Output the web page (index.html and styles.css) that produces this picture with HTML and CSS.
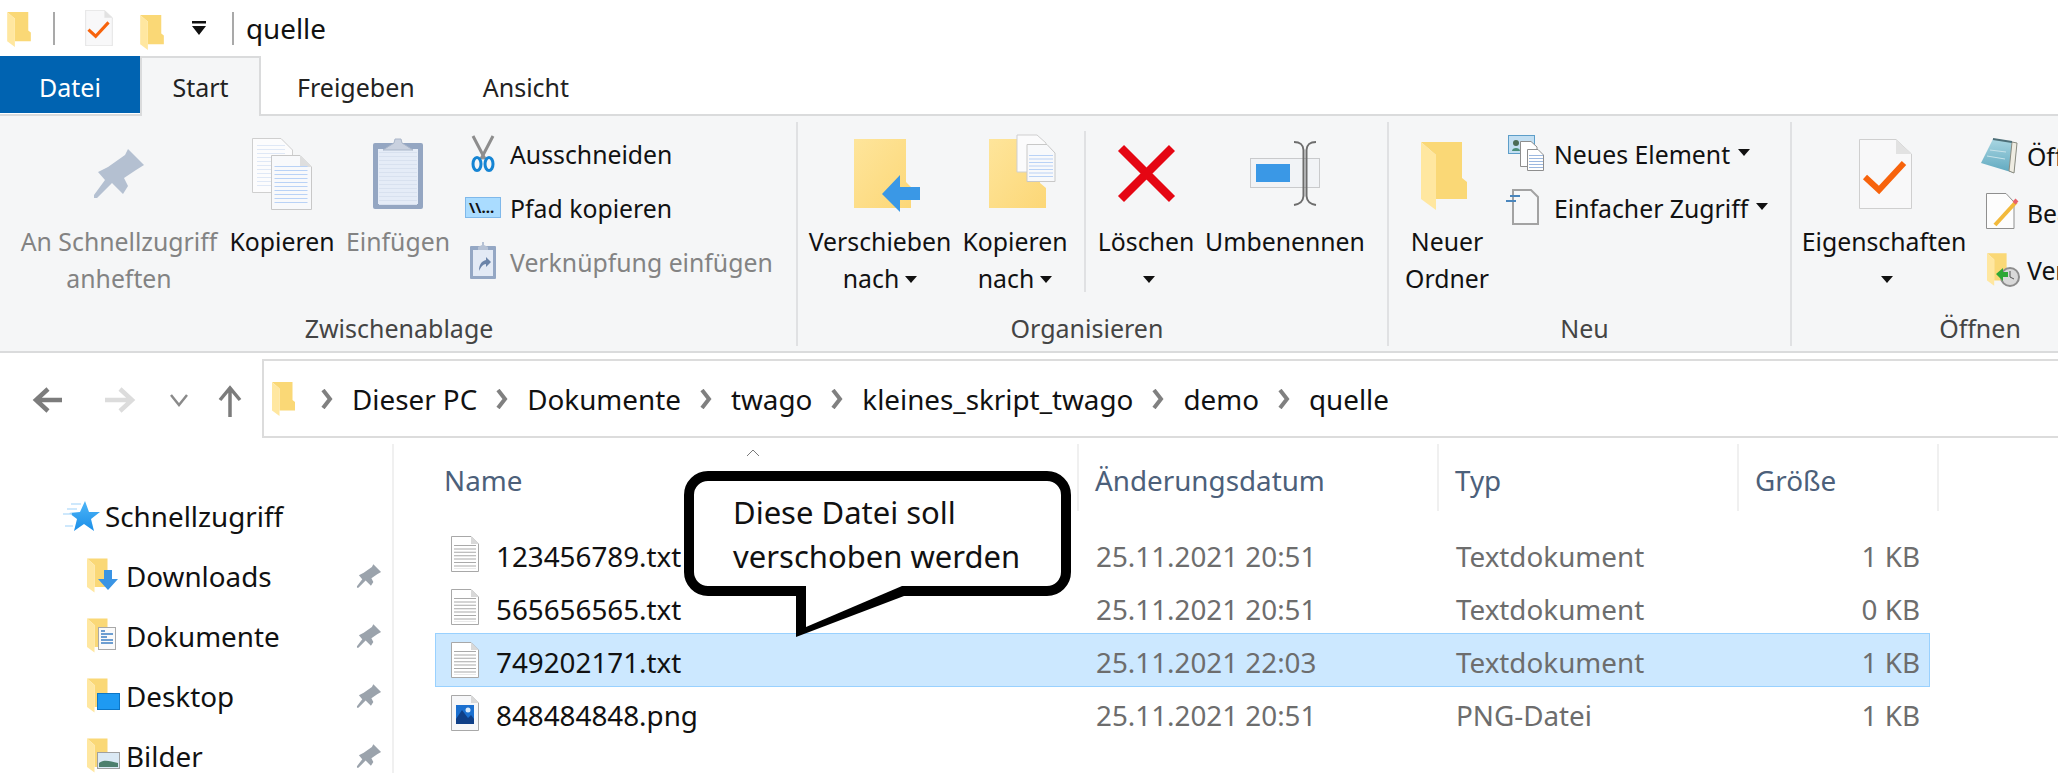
FILE: index.html
```html
<!DOCTYPE html>
<html lang="de">

<head>
    <meta charset="UTF-8">
    <meta name="viewport" content="width=device-width, initial-scale=1.0">
    <title>quelle</title>
    <link rel="stylesheet" href="styles.css">
</head>

<body>
    <!-- shared icon shapes -->
    <svg class="icon-defs" width="0" height="0">
        <defs>
            <linearGradient id="folderBody" x1="0" y1="0" x2="1" y2="1">
                <stop offset="0" stop-color="#fee59b" />
                <stop offset="1" stop-color="#fcd777" />
            </linearGradient>
            <linearGradient id="padBody" x1="0" y1="0" x2="0" y2="1">
                <stop offset="0" stop-color="#a9d6e2" />
                <stop offset="1" stop-color="#5fa8bf" />
            </linearGradient>
            <linearGradient id="starBody" x1="0" y1="0" x2="0" y2="1">
                <stop offset="0" stop-color="#4db5f7" />
                <stop offset="1" stop-color="#1c8fe8" />
            </linearGradient>
            <symbol id="folder" viewBox="0 0 46 68">
                <path d="M0 0H41V36L46 40V57H15V13Z" fill="#fad876" />
                <path d="M0 0L15 13V68L0 57Z" fill="#ffe7a0" />
            </symbol>
            <symbol id="pin" viewBox="92 147 54 53">
                <path d="M128 149L144 165L136 170L124 178L128 186L123 194L112 183L97 198H94V195L105 180L98 172L108 167L125 155Z" />
            </symbol>
            <symbol id="prop-doc" viewBox="0 0 53 70">
                <path d="M.5.5H37L52.5 15V69.5H.5Z" fill="#f8f8f9" stroke="#cfcfcf" />
                <path d="M37 .5V15H52.5Z" fill="#e2e2e2" />
                <path d="M6 38L20 51L45 24" fill="none" stroke="#f7630c" stroke-width="6" />
            </symbol>
            <symbol id="txt-file" viewBox="0 0 28 36">
                <path d="M.5.5H20L27.5 8V35.5H.5Z" fill="#fff" stroke="#a8a8a8" />
                <path d="M20 .5V8H27.5Z" fill="#d9d9d9" />
                <path d="M14 9V33" stroke="#a9a9a9" stroke-width="22" stroke-dasharray="1 2.4" />
            </symbol>
            <symbol id="chevron" viewBox="0 0 12 20">
                <path d="M2 1L9 10L2 19" fill="none" stroke="#808080" stroke-width="4" />
            </symbol>
        </defs>
    </svg>

    <div class="explorer">
        <div class="title-bar">
            <svg class="qat-folder" width="24" height="35"><use href="#folder" /></svg>
            <span class="qat-sep"></span>
            <svg class="qat-props" width="28" height="36"><use href="#prop-doc" /></svg>
            <svg class="qat-folder2" width="24" height="35"><use href="#folder" /></svg>
            <svg class="qat-drop" width="14" height="14" viewBox="0 0 14 14">
                <path d="M0 0H14V2.500H0ZM0 5H14L7 14Z" fill="#111" />
            </svg>
            <span class="qat-sep qat-sep-last"></span>
            <span class="window-title">quelle</span>
        </div>

        <div class="tabs">
            <div class="tab tab-file">Datei</div>
            <div class="tab tab-active">Start</div>
            <div class="tab tab-share">Freigeben</div>
            <div class="tab tab-view">Ansicht</div>
        </div>

        <div class="ribbon">
            <section class="group group-clipboard">
                <div class="group-body">
                    <div class="big-btn btn-pin disabled">
                        <svg class="big-icon" viewBox="59 116 120 108">
                            <use href="#pin" x="92" y="147" width="54" height="53" fill="#b4c0d1" />
                        </svg>
                        <span>An Schnellzugriff<br>anheften</span>
                    </div>
                    <div class="big-btn btn-copy">
                        <svg class="big-icon" viewBox="222 116 120 108">
                            <path d="M252.500 138.500H281L292.500 150V192.500H252.500Z" fill="#fcfcfd" stroke="#cfcfcf" />
                            <path d="M271 145V186" stroke="#dfe8f6" stroke-width="28" stroke-dasharray="1 3" />
                            <path d="M271.500 155.500H300L311.500 167V209.500H271.500Z" fill="#f8f9fb" stroke="#c8c8c8" />
                            <path d="M300 155.500V167H311.500Z" fill="#dedede" />
                            <path d="M291 166V204" stroke="#b9d2f6" stroke-width="33" stroke-dasharray="1 3" />
                        </svg>
                        <span>Kopieren</span>
                    </div>
                    <div class="big-btn btn-paste disabled">
                        <svg class="big-icon" viewBox="338 116 120 108">
                            <rect x="373" y="143" width="50" height="66" rx="2" fill="#94a6c2" />
                            <rect x="378" y="149" width="40" height="55" fill="#e5ecf7" />
                            <path d="M398 152V205" stroke="#d8e1ef" stroke-width="38" stroke-dasharray="1 3" />
                            <path d="M383 150L394 143L395 139H401L402 143L413 150Z" fill="#c9d1df" stroke="#aab6c9" />
                        </svg>
                        <span>Einfügen</span>
                    </div>
                    <div class="small-col">
                        <div class="small-btn">
                            <svg class="small-icon" viewBox="460 133 44 44">
                                <path d="M473 137L485 160M493 137L481 160" stroke="#8d8d8d" stroke-width="3" fill="none" />
                                <ellipse cx="477" cy="165" rx="4" ry="6.500" fill="none" stroke="#1584d3" stroke-width="3" />
                                <ellipse cx="489" cy="165" rx="4" ry="6.500" fill="none" stroke="#1584d3" stroke-width="3" />
                            </svg>
                            <span>Ausschneiden</span>
                        </div>
                        <div class="small-btn">
                            <svg class="small-icon" viewBox="460 187 44 44">
                                <rect x="465.500" y="198.500" width="35" height="20" fill="#aadcff" stroke="#7fb8ea" />
                                <text class="path-glyph" x="469" y="214">\\...</text>
                            </svg>
                            <span>Pfad kopieren</span>
                        </div>
                        <div class="small-btn disabled">
                            <svg class="small-icon" viewBox="460 241 44 44">
                                <rect x="470" y="247" width="26" height="33" rx="1" fill="#94a7c4" />
                                <rect x="473" y="251" width="20" height="26" fill="#e3eaf5" />
                                <path d="M478 248L482 246V243H484V246L488 248V251H478Z" fill="#b6c2d5" />
                                <path d="M479 272C479 265 482 262 486 261V258L491 263L486 268V265C483 265 481 268 479 272Z" fill="#6b84a9" />
                            </svg>
                            <span>Verknüpfung einfügen</span>
                        </div>
                    </div>
                </div>
                <div class="group-label">Zwischenablage</div>
            </section>

            <section class="group group-organize">
                <div class="group-body">
                    <div class="big-btn btn-move">
                        <svg class="big-icon" viewBox="820 116 120 108">
                            <path d="M854 139H906V182L911 187V208H854Z" fill="url(#folderBody)" />
                            <path d="M882 194L900 175V187H920V200H900V212Z" fill="#3a98e6" />
                        </svg>
                        <span>Verschieben<br>nach<i class="drop"></i></span>
                    </div>
                    <div class="big-btn btn-copyto">
                        <svg class="big-icon" viewBox="955 116 120 108">
                            <path d="M989 139H1040V183L1046 188V208H989Z" fill="url(#folderBody)" />
                            <path d="M1017 135H1037L1046 143V172H1017Z" fill="#fbfbfc" stroke="#cfcfcf" />
                            <path d="M1027 144.500H1047L1055 153V181.500H1027Z" fill="#f8f9fb" stroke="#c8c8c8" />
                            <path d="M1041 155V179" stroke="#b9d2f6" stroke-width="24" stroke-dasharray="1 2.500" />
                        </svg>
                        <span>Kopieren<br>nach<i class="drop"></i></span>
                    </div>
                    <span class="inner-sep"></span>
                    <div class="big-btn btn-delete">
                        <svg class="big-icon" viewBox="1086 116 120 108">
                            <path d="M1121 148L1172 199M1172 148L1121 199" stroke="#e50613" stroke-width="8.500" fill="none" />
                        </svg>
                        <span>Löschen<br><i class="drop"></i></span>
                    </div>
                    <div class="big-btn btn-rename">
                        <svg class="big-icon" viewBox="1225 116 120 108">
                            <rect x="1250.500" y="158.500" width="69" height="29" fill="#f1f3f6" stroke="#c9cacc" />
                            <rect x="1256" y="164" width="34" height="18" fill="#3a98e6" />
                            <path d="M1294 142C1301 142 1303 145 1303.500 150V196C1303 201 1301 204 1294 205M1316 142C1309 142 1307 145 1306.500 150V196C1307 201 1309 204 1316 205" fill="none" stroke="#6d6d6d" stroke-width="2" />
                        </svg>
                        <span>Umbenennen</span>
                    </div>
                </div>
                <div class="group-label">Organisieren</div>
            </section>

            <section class="group group-new">
                <div class="group-body">
                    <div class="big-btn btn-newfolder">
                        <svg class="big-icon" viewBox="1387 116 120 108">
                            <use href="#folder" x="1421" y="142" width="46" height="68" />
                        </svg>
                        <span>Neuer<br>Ordner</span>
                    </div>
                    <div class="small-col">
                        <div class="small-btn">
                            <svg class="small-icon" viewBox="1504 133 44 44">
                                <rect x="1508.500" y="136.500" width="26" height="18" fill="#c3dff2" stroke="#5d9ec9" />
                                <circle cx="1516" cy="144" r="3" fill="#4b6b55" />
                                <path d="M1512 152C1512 148 1520 148 1520 152Z" fill="#4b8f7a" />
                                <path d="M1520.500 142.500H1531L1537 148V167.500H1520.500Z" fill="#fff" stroke="#8e8e8e" />
                                <path d="M1527.500 150.500H1538L1543.500 156V171.500H1527.500Z" fill="#fff" stroke="#8e8e8e" />
                                <path d="M1536 156V171" stroke="#9cb8e0" stroke-width="14" stroke-dasharray="1 2" />
                            </svg>
                            <span>Neues Element<i class="drop"></i></span>
                        </div>
                        <div class="small-btn">
                            <svg class="small-icon" viewBox="1504 187 44 44">
                                <path d="M1513 191H1531L1538 198V225H1513Z" fill="#f7f8f9" stroke="#a3a3a3" stroke-width="2" />
                                <path d="M1510 197H1520M1506 202H1516" stroke="#4a86bd" stroke-width="2" />
                            </svg>
                            <span>Einfacher Zugriff<i class="drop"></i></span>
                        </div>
                    </div>
                </div>
                <div class="group-label">Neu</div>
            </section>

            <section class="group group-open">
                <div class="group-body">
                    <div class="big-btn btn-props">
                        <svg class="big-icon" viewBox="1824 116 120 108">
                            <use href="#prop-doc" x="1859" y="139" width="53" height="70" />
                        </svg>
                        <span>Eigenschaften<br><i class="drop"></i></span>
                    </div>
                    <div class="small-col small-col-wide">
                        <div class="small-btn">
                            <svg class="small-icon" viewBox="1977 134 44 44">
                                <path d="M1993 139L2017 143L2014 173L1981 163Z" fill="url(#padBody)" />
                                <path d="M2017 143L2014 173L2009 171L2012 142Z" fill="#eeece2" stroke="#8b8b80" />
                                <path d="M1993 139L2012 142" stroke="#4d6f78" stroke-width="2" />
                                <path d="M1990 150L2006 152M1987 156L2005 159" stroke="#c7e3ea" />
                            </svg>
                            <span>Öffnen</span>
                        </div>
                        <div class="small-btn">
                            <svg class="small-icon" viewBox="1977 192 44 44">
                                <path d="M1986.500 194.500H2006L2014 203V229.500H1986.500Z" fill="#fdfdfd" stroke="#8f8f8f" />
                                <path d="M2016 203L1995 226" stroke="#f2b93b" stroke-width="4" />
                                <path d="M2017 201L2014 204" stroke="#e8616a" stroke-width="4" />
                            </svg>
                            <span>Bearbeiten</span>
                        </div>
                        <div class="small-btn">
                            <svg class="small-icon" viewBox="1977 248 44 44">
                                <use href="#folder" x="1987" y="252" width="22" height="35" />
                                <circle cx="2010" cy="277" r="9" fill="#d9d9d9" stroke="#8d8d8d" stroke-width="2" />
                                <path d="M2010 271V277L2014 279" fill="none" stroke="#555" />
                                <path d="M1996 274L2003 268V272H2008V277H2003V281Z" fill="#2ea836" />
                            </svg>
                            <span>Verlauf</span>
                        </div>
                    </div>
                </div>
                <div class="group-label">Öffnen</div>
            </section>
        </div>

        <div class="nav-row">
            <svg class="nav-buttons" width="262" height="79" viewBox="0 359 262 79">
                <path d="M62 400H38M48 389L36 400L48 411" fill="none" stroke="#7c7c7c" stroke-width="4.500" />
                <path d="M105 400H130M120 389L132 400L120 411" fill="none" stroke="#dcdcdc" stroke-width="4.500" />
                <path d="M171 395L179 405L187 395" fill="none" stroke="#8a8a8a" stroke-width="2.500" />
                <path d="M230 417V390M220 400L230 388L240 400" fill="none" stroke="#7c7c7c" stroke-width="3.500" />
            </svg>
            <div class="address-bar">
                <svg class="addr-folder" width="23" height="34"><use href="#folder" /></svg>
                <svg class="crumb-sep crumb-sep-first" width="12" height="20"><use href="#chevron" /></svg>
                <span>Dieser PC</span>
                <svg class="crumb-sep" width="12" height="20"><use href="#chevron" /></svg>
                <span>Dokumente</span>
                <svg class="crumb-sep" width="12" height="20"><use href="#chevron" /></svg>
                <span>twago</span>
                <svg class="crumb-sep" width="12" height="20"><use href="#chevron" /></svg>
                <span>kleines_skript_twago</span>
                <svg class="crumb-sep" width="12" height="20"><use href="#chevron" /></svg>
                <span>demo</span>
                <svg class="crumb-sep" width="12" height="20"><use href="#chevron" /></svg>
                <span>quelle</span>
            </div>
        </div>

        <div class="content">
            <nav class="sidebar">
                <div class="side-item side-root">
                    <svg class="side-star" width="38" height="32" viewBox="0 0 38 32">
                        <path d="M22 1L26 12L37 12L28 19L31 31L21 24L11 31L14 19L6 13L17 12Z" fill="url(#starBody)" />
                        <path d="M0 14H9M4 9H14M8 4H18M2 26H10" stroke="#bfe1fb" stroke-width="1.500" />
                    </svg>
                    <span>Schnellzugriff</span>
                </div>
                <div class="side-item">
                    <svg class="side-icon" width="34" height="36" viewBox="0 0 34 36">
                        <use href="#folder" width="23" height="35" />
                        <path d="M17 12H25V21H31L21 32L11 21H17Z" fill="#3a94e4" />
                    </svg>
                    <span>Downloads</span>
                    <svg class="side-pin" width="26" height="26"><use href="#pin" /></svg>
                </div>
                <div class="side-item">
                    <svg class="side-icon" width="34" height="36" viewBox="0 0 34 36">
                        <use href="#folder" width="23" height="35" />
                        <rect x="11.500" y="9.500" width="17" height="22" fill="#fafafa" stroke="#a8a8a8" />
                        <path d="M14 13H18M14 16H26M14 19H20M14 22H26M14 25H26" stroke="#3f80c4" stroke-width="1.500" />
                    </svg>
                    <span>Dokumente</span>
                    <svg class="side-pin" width="26" height="26"><use href="#pin" /></svg>
                </div>
                <div class="side-item">
                    <svg class="side-icon" width="34" height="36" viewBox="0 0 34 36">
                        <use href="#folder" width="23" height="35" />
                        <rect x="10.500" y="15.500" width="22" height="16" fill="#1e9af2" stroke="#0c76c6" />
                    </svg>
                    <span>Desktop</span>
                    <svg class="side-pin" width="26" height="26"><use href="#pin" /></svg>
                </div>
                <div class="side-item">
                    <svg class="side-icon" width="34" height="36" viewBox="0 0 34 36">
                        <use href="#folder" width="23" height="35" />
                        <rect x="10.500" y="14.500" width="22" height="16" fill="#dbe9f4" stroke="#a0a0a0" />
                        <path d="M12 25C17 21 23 23 31 25V29H12Z" fill="#4d7f6d" />
                    </svg>
                    <span>Bilder</span>
                    <svg class="side-pin" width="26" height="26"><use href="#pin" /></svg>
                </div>
            </nav>

            <main class="file-list">
                <div class="list-head">
                    <div class="col-head col-name">
                        Name
                        <svg class="sort-caret" width="14" height="8" viewBox="0 0 14 8">
                            <path d="M1 7L7 1L13 7" fill="none" stroke="#7a7a7a" />
                        </svg>
                    </div>
                    <div class="col-head">Änderungsdatum</div>
                    <div class="col-head">Typ</div>
                    <div class="col-head">Größe</div>
                </div>
                <div class="file-row">
                    <div class="file-name">
                        <svg width="28" height="36"><use href="#txt-file" /></svg>
                        <span>123456789.txt</span>
                    </div>
                    <div>25.11.2021 20:51</div>
                    <div>Textdokument</div>
                    <div class="file-size">1 KB</div>
                </div>
                <div class="file-row">
                    <div class="file-name">
                        <svg width="28" height="36"><use href="#txt-file" /></svg>
                        <span>565656565.txt</span>
                    </div>
                    <div>25.11.2021 20:51</div>
                    <div>Textdokument</div>
                    <div class="file-size">0 KB</div>
                </div>
                <div class="file-row selected">
                    <div class="file-name">
                        <svg width="28" height="36"><use href="#txt-file" /></svg>
                        <span>749202171.txt</span>
                    </div>
                    <div>25.11.2021 22:03</div>
                    <div>Textdokument</div>
                    <div class="file-size">1 KB</div>
                </div>
                <div class="file-row">
                    <div class="file-name">
                        <svg width="28" height="36" viewBox="0 0 28 36">
                            <path d="M.5.5H20L27.5 8V35.5H.5Z" fill="#f6f7f9" stroke="#a8a8a8" />
                            <path d="M20 .5V8H27.5Z" fill="#d9d9d9" />
                            <rect x="5" y="10" width="18" height="19" fill="#1a6fcf" />
                            <circle cx="17" cy="15" r="2.500" fill="#d8eafb" />
                            <path d="M5 29V24L11 15L17 23L20 20L23 24V29Z" fill="#0f3f87" />
                        </svg>
                        <span>848484848.png</span>
                    </div>
                    <div>25.11.2021 20:51</div>
                    <div>PNG-Datei</div>
                    <div class="file-size">1 KB</div>
                </div>
            </main>
        </div>

        <!-- speech bubble lies over the list -->
        <div class="bubble">
            Diese Datei soll<br>verschoben werden
            <svg class="bubble-tail" width="120" height="60" viewBox="790 580 120 60">
                <path d="M796 586V637L904 596V586Z" fill="#000" />
                <path d="M806 580V627L902 586V580Z" fill="#fff" />
            </svg>
        </div>
    </div>
</body>

</html>
```

FILE: styles.css
```css
* {
    box-sizing: border-box;
}

html,
body {
    margin: 0;
    padding: 0;
    background-color: #fff;
    overflow: hidden;
}

body {
    font-family: "Noto Sans", "Open Sans", sans-serif;
    font-size: 27.8px;
    color: #111;
}

.icon-defs {
    position: absolute;
}

.explorer {
    position: relative;
    width: 2058px;
    height: 773px;
    overflow: hidden;
}

/* title bar */
.title-bar {
    display: flex;
    align-items: center;
    height: 56px;
    padding-left: 7px;
}

.qat-folder {
    margin-top: 2px;
}

.qat-sep {
    width: 2px;
    height: 33px;
    margin-left: 22px;
    background-color: #a9a9a9;
}

.qat-props {
    margin-left: 30px;
}

.qat-folder2 {
    margin-left: 27px;
    margin-top: 8px;
}

.qat-drop {
    margin-left: 28px;
}

.qat-sep-last {
    margin-left: 26px;
}

.window-title {
    margin-left: 12px;
    line-height: 42px;
}

/* tabs */
.tabs {
    display: flex;
    height: 60px;
    border-bottom: 2px solid #dadbdc;
}

.tab {
    height: 59px;
    line-height: 62px;
    font-size: 25px;
    color: #222;
}

.tab-file {
    width: 140px;
    height: 57px;
    background-color: #0063b1;
    color: #fff;
    text-align: center;
}

.tab-active {
    width: 121px;
    height: 60px;
    background-color: #f5f6f7;
    border: 2px solid #dadbdc;
    border-bottom: 0;
    line-height: 58px;
    text-align: center;
}

.tab-share {
    margin-left: 36px;
}

.tab-view {
    margin-left: 68px;
}

/* ribbon */
.ribbon {
    display: flex;
    height: 237px;
    background-color: #f5f6f7;
    border-bottom: 2px solid #dadbdc;
}

.group {
    display: flex;
    flex-direction: column;
    flex: none;
    height: 235px;
}

.group-clipboard {
    width: 798px;
    padding-left: 19px;
    background: linear-gradient(#e0e1e3, #e0e1e3) no-repeat right 6px / 2px 224px;
}

.group-organize {
    width: 591px;
    padding-left: 12px;
    background: linear-gradient(#e0e1e3, #e0e1e3) no-repeat right 6px / 2px 224px;
}

.group-new {
    width: 403px;
    padding-left: 13px;
    background: linear-gradient(#e0e1e3, #e0e1e3) no-repeat right 6px / 2px 224px;
}

.group-open {
    width: 376px;
    padding-left: 11px;
}

.group-body {
    display: flex;
    flex: 1;
}

.group-label {
    height: 37px;
    margin: 0 13px 4px -12px;
    line-height: 37px;
    text-align: center;
    font-size: 25px;
    color: #444;
}

.group-clipboard .group-label {
    margin: 0 0 4px -19px;
}

.group-open .group-label {
    margin: 0 0 4px -11px;
}

.big-btn {
    display: flex;
    flex-direction: column;
    align-items: center;
    flex: none;
    line-height: 37px;
    text-align: center;
    white-space: nowrap;
    font-size: 24.8px;
}

.big-icon {
    flex: none;
    width: 120px;
    height: 108px;
    margin-bottom: -1px;
}

.disabled {
    color: #838383;
}

.btn-pin {
    width: 200px;
}

.btn-copy {
    width: 112px;
    margin-left: 7px;
}

.btn-paste {
    width: 112px;
    margin-left: 4px;
}

.btn-move {
    width: 140px;
}

.btn-copyto {
    width: 104px;
    margin-left: 13px;
}

.inner-sep {
    flex: none;
    width: 2px;
    height: 161px;
    margin: 15px 0 0 17px;
    background-color: #e0e1e3;
}

.btn-delete {
    width: 94px;
    margin-left: 13px;
}

.btn-rename {
    width: 158px;
    margin-left: 13px;
}

.btn-newfolder {
    width: 90px;
}

.btn-props {
    width: 162px;
}

.drop {
    display: inline-block;
    width: 0;
    height: 0;
    margin-left: 6px;
    vertical-align: 5px;
    border-left: 6px solid transparent;
    border-right: 6px solid transparent;
    border-top: 7px solid #111;
}

.small-col {
    flex: none;
    margin: 11px 0 0 6px;
}

.group-new .small-col,
.group-open .small-col {
    margin-left: 12px;
}

.small-btn {
    display: flex;
    align-items: center;
    height: 54px;
    white-space: nowrap;
    font-size: 24.8px;
}

.small-btn .small-icon {
    flex: none;
    width: 44px;
    height: 44px;
    margin-right: 6px;
}

.small-col-wide .small-btn {
    height: 57px;
}

.small-btn .drop {
    margin-left: 8px;
    vertical-align: 8px;
}

.path-glyph {
    font-size: 15px;
    font-weight: bold;
    fill: #111;
}

/* address row */
.nav-row {
    display: flex;
    margin-top: 6px;
    height: 79px;
}

.nav-buttons {
    flex: none;
}

.address-bar {
    display: flex;
    align-items: center;
    flex: none;
    width: 1800px;
    padding-left: 8px;
    border: 2px solid #dcdcdc;
    border-right: 0;
    white-space: nowrap;
}

.crumb-sep {
    flex: none;
    margin: 0 19px;
}

.crumb-sep-first {
    margin-left: 26px;
}

/* sidebar and file list */
.content {
    display: flex;
    height: 335px;
}

.sidebar {
    flex: none;
    width: 394px;
    margin-top: 6px;
    padding-top: 42px;
    border-right: 2px solid #f0f0f0;
}

.side-item {
    display: flex;
    align-items: center;
    height: 60px;
    padding-left: 87px;
}

.side-item .side-icon {
    flex: none;
    margin-right: 5px;
}

.side-root {
    padding-left: 63px;
}

.side-star {
    flex: none;
    margin-right: 4px;
}

.side-pin {
    flex: none;
    margin-left: auto;
    margin-right: 10px;
    fill: #9ba3ac;
}

.file-list {
    flex: none;
    width: 1540px;
    margin-top: 6px;
    padding-left: 41px;
}

.list-head {
    display: grid;
    grid-template-columns: 644px 360px 300px 200px;
    height: 67px;
    margin-bottom: 16px;
    color: #4c607a;
}

.col-head {
    position: relative;
    padding: 17px 0 0 16px;
    border-right: 2px solid #f0f0f0;
}

.col-name {
    padding-left: 9px;
}

.sort-caret {
    position: absolute;
    top: 5px;
    left: 311px;
}

.file-row {
    display: grid;
    grid-template-columns: 660px 360px 300px 175px;
    align-items: center;
    width: 1495px;
    height: 53px;
    border: 1px solid transparent;
    color: #6d6d6d;
}

.file-row > div {
    padding-top: 4px;
}

.file-row.selected {
    background-color: #cce8ff;
    border-color: #99d1ff;
    height: 54px;
    margin-bottom: -1px;
}

.file-name {
    display: flex;
    align-items: center;
    padding-left: 15px;
    color: #111;
}

.file-name svg {
    flex: none;
    margin-right: 17px;
    margin-top: -4px;
}

.file-size {
    padding-right: 11px;
    text-align: right;
}

/* speech bubble */
.bubble {
    position: absolute;
    left: 684px;
    top: 471px;
    width: 387px;
    height: 125px;
    padding: 9px 0 0 39px;
    background-color: #fff;
    border: 10px solid #000;
    border-radius: 24px;
    line-height: 44px;
    font-size: 31px;
    white-space: nowrap;
}

.bubble-tail {
    position: absolute;
    left: 96px;
    top: 99px;
}
```
